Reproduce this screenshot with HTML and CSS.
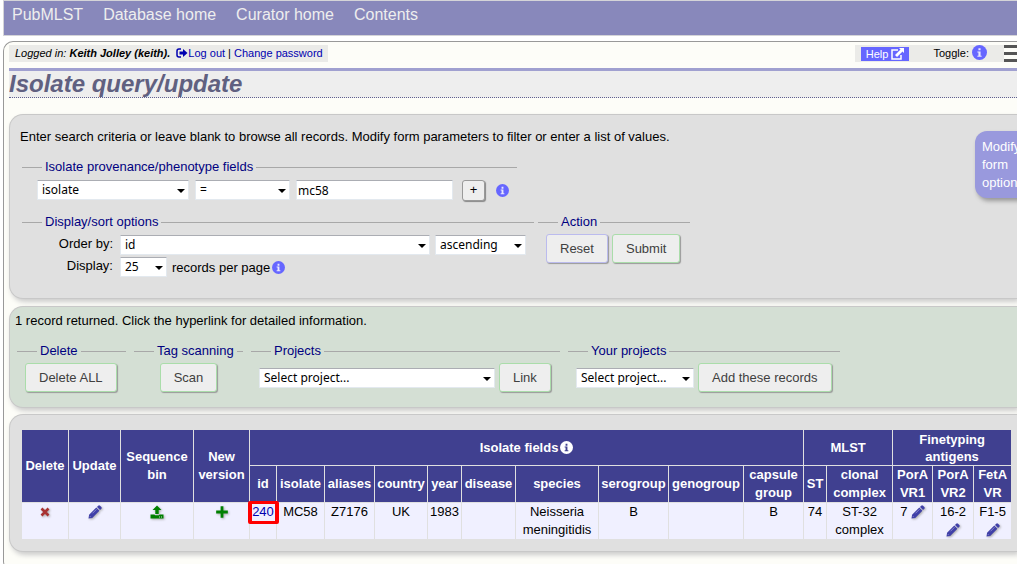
FILE: index.html
```html
<!DOCTYPE html>
<html lang="en">
<head>
<meta charset="utf-8">
<title>Isolate query/update</title>
<link rel="stylesheet" href="styles.css">
</head>
<body>
<svg class="sprite" aria-hidden="true">
  <symbol id="i-info" viewBox="0 0 14 14"><circle cx="7" cy="7" r="7" fill="currentColor"/><path class="hole" d="M6 3h2v2H6zM5 6h3v4h1v1H5v-1h1V7H5z"/></symbol>
  <symbol id="i-logout" viewBox="0 0 12 10"><path d="M5 1H3Q1 1 1 3v4q0 2 2 2h2" fill="none" stroke="currentColor" stroke-width="1.5"/><path d="M3.5 3.5H7V1l4.5 4L7 9V6.500H3.500z" fill="currentColor"/></symbol>
  <symbol id="i-ext" viewBox="0 0 13 12"><path d="M7 2H1v9h9V7" fill="none" stroke="currentColor" stroke-width="1.500"/><path d="M8 0h5v5l-1.500-1.500L6 9 4 7l5.500-5.500z" fill="currentColor"/></symbol>
  <symbol id="i-pencil" viewBox="0 0 14 14"><path d="M10.200.7q.9-.9 1.800 0l1.300 1.300q.9.900 0 1.800l-1.200 1.200-3.100-3.100zM8.300 2.600l3.100 3.100-7.200 7.200L.5 13.500l.6-3.700z" fill="currentColor"/><path d="M4.500 8.300l4-4M1.900 11.200l.9.900" stroke="#f0f0ff" stroke-width=".4"/></symbol>
  <symbol id="i-cross" viewBox="0 0 10 10"><path d="M1.500 1.500l7 7M8.500 1.500l-7 7" stroke="currentColor" stroke-width="2.600"/></symbol>
  <symbol id="i-plus" viewBox="0 0 12 12"><path d="M6 1v10M1 6h10" stroke="currentColor" stroke-width="2.400"/></symbol>
  <symbol id="i-upload" viewBox="0 0 14 14"><path d="M7 .5l4.500 4.500H8.700V9H5.300V5H2.500zM.5 9.500h4l.5.700h4l.5-.7h4V13.500H.5z" fill="currentColor"/><path d="M9 12h1M11 12h1" stroke="#f0f0ff" stroke-width=".8"/></symbol>
</svg>

<nav class="menu">
  <a href="#">PubMLST</a><a href="#">Database home</a><a href="#">Curator home</a><a href="#">Contents</a>
</nav>

<main class="page">
  <div class="bar">
    <div class="login"><i>Logged in: <b>Keith Jolley (keith).</b></i> <a href="#"><svg class="out"><use href="#i-logout"/></svg>Log out</a> | <a href="#">Change password</a></div>
    <div class="tools">
      <div class="status"><a class="help" href="#">Help <svg class="ext"><use href="#i-ext"/></svg></a><span class="toggle">Toggle: <svg class="info big"><use href="#i-info"/></svg></span></div>
      <button class="burger" aria-label="Menu"><span></span><span></span><span></span></button>
    </div>
  </div>
  <h1>Isolate query/update</h1>

  <form class="box query">
    <p>Enter search criteria or leave blank to browse all records. Modify form parameters to filter or enter a list of values.</p>
    <button type="button" class="modify">Modify form options</button>
    <fieldset class="fields">
      <legend>Isolate provenance/phenotype fields</legend>
      <div class="row">
        <span class="sel w-field"><select aria-label="Field"><option>isolate</option></select></span>
        <span class="sel w-op"><select aria-label="Operator"><option>=</option></select></span>
        <input class="value" type="text" aria-label="Value" value="mc58">
        <button type="button" class="add" aria-label="Add field">+</button>
        <svg class="info"><use href="#i-info"/></svg>
      </div>
    </fieldset>
    <div class="sets">
      <fieldset class="sort">
        <legend>Display/sort options</legend>
        <div class="line">
          <label for="order">Order by:</label>
          <span class="sel w-order"><select id="order"><option>id</option></select></span>
          <span class="sel w-dir"><select aria-label="Direction"><option>ascending</option></select></span>
        </div>
        <div class="line">
          <label for="display">Display:</label>
          <span class="sel w-num"><select id="display"><option>25</option></select></span>
          <span class="after">records per page<svg class="info"><use href="#i-info"/></svg></span>
        </div>
      </fieldset>
      <fieldset class="action">
        <legend>Action</legend>
        <div class="buttons"><button type="reset" class="btn reset">Reset</button><button type="submit" class="btn">Submit</button></div>
      </fieldset>
    </div>
  </form>

  <form class="box results">
    <p>1 record returned. Click the hyperlink for detailed information.</p>
    <div class="sets">
      <fieldset class="set-del"><legend>Delete</legend><div class="buttons"><button type="button" class="btn">Delete ALL</button></div></fieldset>
      <fieldset class="set-tag"><legend>Tag scanning</legend><div class="buttons"><button type="button" class="btn">Scan</button></div></fieldset>
      <fieldset class="set-proj"><legend>Projects</legend><div class="buttons"><span class="sel w-proj"><select aria-label="Project"><option>Select project...</option></select></span><button type="button" class="btn">Link</button></div></fieldset>
      <fieldset class="set-your"><legend>Your projects</legend><div class="buttons"><span class="sel w-your"><select aria-label="Your project"><option>Select project...</option></select></span><button type="button" class="btn">Add these records</button></div></fieldset>
    </div>
  </form>

  <section class="box list">
    <table>
      <colgroup><col class="c46"><col class="c51"><col class="c72"><col class="c55"><col class="c26"><col class="c47"><col class="c49"><col class="c52"><col class="c33"><col class="c53"><col class="c82"><col class="c69"><col class="c74"><col class="c59"><col class="c22"><col class="c65"><col class="c39"><col class="c40"><col class="c37"></colgroup>
      <thead>
        <tr><th rowspan="2">Delete</th><th rowspan="2">Update</th><th rowspan="2">Sequence bin</th><th rowspan="2">New version</th><th colspan="10">Isolate fields<svg class="info light"><use href="#i-info"/></svg></th><th colspan="2">MLST</th><th class="tight" colspan="3">Finetyping antigens</th></tr>
        <tr><th>id</th><th>isolate</th><th>aliases</th><th>country</th><th>year</th><th>disease</th><th>species</th><th>serogroup</th><th>genogroup</th><th>capsule group</th><th>ST</th><th>clonal complex</th><th>PorA VR1</th><th>PorA VR2</th><th>FetA VR</th></tr>
      </thead>
      <tbody>
        <tr>
          <td><a href="#" aria-label="Delete"><svg class="ico sm del"><use href="#i-cross"/></svg></a></td>
          <td><a href="#" aria-label="Update"><svg class="ico pen"><use href="#i-pencil"/></svg></a></td>
          <td><a href="#" aria-label="Sequence bin"><svg class="ico green"><use href="#i-upload"/></svg></a></td>
          <td><a href="#" aria-label="New version"><svg class="ico green"><use href="#i-plus"/></svg></a></td>
          <td class="marked"><a href="#">240</a></td><td>MC58</td><td>Z7176</td><td>UK</td><td>1983</td><td></td><td>Neisseria meningitidis</td><td>B</td><td></td><td>B</td><td>74</td><td>ST-32 complex</td>
          <td>7 <a href="#" aria-label="Edit"><svg class="ico pen"><use href="#i-pencil"/></svg></a></td>
          <td>16-2 <a href="#" aria-label="Edit"><svg class="ico pen"><use href="#i-pencil"/></svg></a></td>
          <td>F1-5 <a href="#" aria-label="Edit"><svg class="ico pen"><use href="#i-pencil"/></svg></a></td>
        </tr>
      </tbody>
    </table>
  </section>
</main>
</body>
</html>
```
FILE: styles.css
```css
*, *::after { box-sizing: border-box; }
html, body { overflow: hidden; }
body {
  margin: 0 0 0 3px;
  background: #fff;
  color: #000;
  font: 13px/18px "Liberation Sans", Arial, sans-serif;
}
a { color: #0000b0; text-decoration: none; }
p, h1, fieldset { margin: 0; }
fieldset { min-width: 0; padding: 0; border: 0; border-top: 1px solid #a8a8a8; }
legend { margin-left: 20px; padding: 0 3px; color: #000080; }
button, input, select { font: inherit; color: inherit; }
.sprite { position: absolute; width: 0; height: 0; }

.menu {
  display: flex;
  gap: 20px;
  height: 36px;
  padding: 5px 8px;
  border: 1px solid #d4d4d8;
  border-right: 0;
  background: #8888bb;
  font-size: 16px;
}
.menu a { color: #eee; }

.page {
  margin-top: 5px;
  padding: 3px 0 19px 5px;
  border: 1px solid #999;
  border-right: 0;
  border-radius: 10px 0 0 10px;
  background: #fdfdf8;
}
.bar { display: flex; justify-content: space-between; font-size: 11px; line-height: 17px; }
.login { padding: 0 5px 0 6px; background: #ebebe8; }
.login i { margin-right: 3px; }
.out { width: 12px; height: 10px; vertical-align: -1px; }
.tools { display: flex; }
.status { display: flex; align-items: center; padding: 0 17px 0 6px; background: #ebebe8; }
.help { padding: 0 5px; background: #6666ff; color: #fff; line-height: 14px; }
.ext { width: 13px; height: 12px; vertical-align: -2px; }
.toggle { margin-left: 24px; }
.burger { display: flex; flex-direction: column; justify-content: space-between; width: 13px; padding: 0; border: 0; background: none; }
.burger span { height: 3px; background: #555; }

.info { width: 13px; height: 13px; color: #6666ff; vertical-align: -2px; --hole: #e8e8ff; }
.info.big { width: 15px; height: 15px; vertical-align: -3px; }
.info.light { margin-left: 2px; color: #fff; --hole: #404090; }
.hole { fill: var(--hole); }

h1 {
  height: 30px;
  margin-top: 6px;
  border-top: 3px solid #a0a0d0;
  border-bottom: 1px dotted #606090;
  background: #eee;
  color: #606080;
  font: italic bold 24px/26px "Liberation Sans", Arial, sans-serif;
}

.box {
  position: relative;
  border: 1px solid #c8c8c8;
  border-right: 0;
  border-radius: 14px 0 0 14px;
  background: #e0e0e0;
  box-shadow: 2px 3px 5px #ccc;
}
.query { margin-top: 16px; padding: 13px 10px 20px; }
.results { margin-top: 7px; padding: 5px 5px 12px; background: #d4dfd4; }
.list { margin-top: 6px; padding: 14px 4px 11px 11px; }
.modify {
  position: absolute;
  top: 16px;
  right: -18px;
  width: 60px;
  height: 67px;
  padding: 0 7px;
  border: 0;
  border-radius: 12px;
  background: #9999dd;
  box-shadow: 2px 3px 4px #999;
  color: #fff;
  text-align: left;
}

.fields { width: 495px; margin: 12px 0 0 2px; }
.row { display: flex; align-items: center; gap: 6px; height: 28px; padding-left: 15px; }
.sets { display: flex; align-items: flex-start; }
.query .sets { gap: 4px; margin: 9px 0 0 2px; }
.results .sets { gap: 8px; margin: 12px 0 0 2px; }
.sort { width: 512px; }
.action { width: 152px; }
.line { display: flex; gap: 5px; height: 21px; margin-top: 4px; }
.line + .line { margin-top: 1px; }
.line label { width: 93px; padding-right: 2px; text-align: right; }
.after { padding-top: 2px; }
.after .info { margin-left: 2px; }

.sel { position: relative; display: block; height: 20px; }
.sel select, .value {
  appearance: none;
  display: block;
  width: 100%;
  height: 20px;
  margin: 0;
  padding: 0 4px;
  border: 1px solid #e3e9ef;
  border-top-color: #abadb3;
  border-radius: 0;
  background: #fff;
  font: 12px/16px "Noto Sans", Tahoma, sans-serif;
}
.sel::after {
  content: "";
  position: absolute;
  top: 9px;
  right: 4px;
  border: 4px solid transparent;
  border-top-color: #000;
  border-bottom: 0;
}
.w-field { width: 152px; }
.w-op { width: 95px; }
.sel + .value { width: 157px; padding: 0 1px; }
.w-order { width: 310px; }
.w-dir { width: 91px; }
.w-num { width: 47px; }
.w-proj { width: 236px; }
.w-your { width: 118px; }
.add { width: 23px; height: 21px; margin: 0 5px 0 3px; padding: 0; border: 1px solid #999; border-radius: 3px; background: #eee; box-shadow: 1px 1px 1px #888; line-height: 16px; }

.buttons { display: flex; align-items: center; gap: 4px; padding: 3px 8px; }
.btn {
  height: 29px;
  padding: 0 13px;
  border: 1px solid #aaddaa;
  border-radius: 3px;
  background: #eee;
  box-shadow: 1px 1px 1px #999;
  color: #404040;
}
.btn.reset { border-color: #bbbbee; }
.set-del, .set-tag { width: 109px; }
.set-tag .buttons { justify-content: center; }
.set-proj { width: 309px; }
.set-your { width: 272px; }

table { width: 990px; table-layout: fixed; border-spacing: 1px; }
th, td { padding: 0; text-align: center; }
th { height: 36px; background: #404090; color: #fff; }
thead tr:first-child th { height: 35px; }
th.tight { line-height: 17px; }
td { height: 36px; background: #f0f0ff; vertical-align: top; }
.c22 { width: 22px; } .c26 { width: 26px; } .c33 { width: 33px; } .c37 { width: 37px; }
.c39 { width: 39px; } .c40 { width: 40px; } .c46 { width: 46px; } .c47 { width: 47px; }
.c49 { width: 49px; } .c51 { width: 51px; } .c52 { width: 52px; } .c53 { width: 53px; }
.c55 { width: 55px; } .c59 { width: 59px; } .c65 { width: 65px; } .c69 { width: 69px; }
.c72 { width: 72px; } .c74 { width: 74px; } .c82 { width: 82px; }
.ico { width: 14px; height: 14px; vertical-align: -3px; filter: drop-shadow(1px 1px 1px #aaa); }
.ico.sm { width: 10px; height: 10px; vertical-align: -1px; }
.pen { color: #4040a8; }
.del { color: #a83232; }
.green { color: #008000; }
.marked { position: relative; }
.marked::after {
  content: "";
  position: absolute;
  top: -2px;
  left: -2px;
  width: 31px;
  height: 23px;
  border: solid #f00;
  border-width: 3px 4px;
  border-radius: 2px;
}
```
